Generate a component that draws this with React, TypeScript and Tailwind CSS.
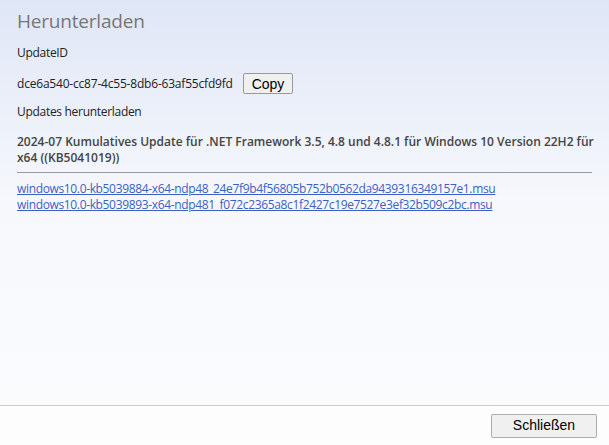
import React from 'react';

const links = [
  'windows10.0-kb5039884-x64-ndp48_24e7f9b4f56805b752b0562da9439316349157e1.msu',
  'windows10.0-kb5039893-x64-ndp481_f072c2365a8c1f2427c19e7527e3ef32b509c2bc.msu',
];

const App: React.FC = () => {
  return (
    <div className="w-[609px] h-[445px] flex flex-col bg-white" style={{ fontFamily: '"Open Sans", "Noto Sans", sans-serif' }}>
      <div className="flex-1 bg-gradient-to-b from-[#dfe6f6] via-[#f6f8fc] to-[#fafbfd] px-[17px] pt-[8px] tracking-[-0.3px]">
        <h1 className="text-[19px] leading-[26px] text-[#777777] font-normal tracking-[-0.2px]">Herunterladen</h1>
        <div className="mt-[11px] text-[12px] leading-[16px] text-[#222]">UpdateID</div>
        <div className="mt-[12px] flex items-center gap-[10px] text-[12px] text-[#222]">
          <span className="tracking-[-0.2px]">dce6a540-cc87-4c55-8db6-63af55cfd9fd</span>
          <button className="h-[21px] px-[8px] border border-[#999] rounded-[2px] bg-[#f0f0f0] text-[14px] leading-[18px] text-black tracking-normal" style={{ fontFamily: '"Liberation Sans", Arial, sans-serif' }}>
            Copy
          </button>
        </div>
        <div className="mt-[10px] text-[12px] leading-[16px] text-[#222]">Updates herunterladen</div>
        <div className="mt-[14px] text-[12px] leading-[16px] font-semibold text-[#444] pb-[6px] border-b border-[#999] whitespace-nowrap tracking-normal">
          2024-07 Kumulatives Update für .NET Framework 3.5, 4.8 und 4.8.1 für Windows 10 Version 22H2 für
          <br />
          x64 ((KB5041019))
        </div>
        <div className="mt-[8px] flex flex-col items-start tracking-[-0.35px]">
          {links.map((l) => (
            <a key={l} href="#" className="text-[12px] leading-[16px] text-[#3b5fc4] underline">
              {l}
            </a>
          ))}
        </div>
      </div>
      <div className="h-[40px] border-t border-[#cccccc] bg-[#fdfdfd] flex items-center justify-end pr-[12px]">
        <button className="w-[106px] h-[24px] border border-[#adadad] rounded-[2px] bg-[#f0f0f0] text-[14px] text-black" style={{ fontFamily: '"Liberation Sans", Arial, sans-serif' }}>
          Schließen
        </button>
      </div>
    </div>
  );
};

export default App;
